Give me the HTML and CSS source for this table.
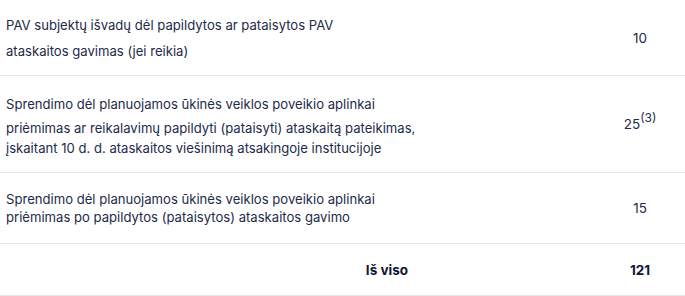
FILE: index.html
```html
<!DOCTYPE html>
<html lang="lt">
<head>
<meta charset="utf-8">
<link rel="stylesheet" href="styles.css">
</head>
<body>
<div class="table">
  <div class="row r1">
    <div class="desc">
      <span class="ln tall">PAV subjektų išvadų dėl papildytos ar pataisytos PAV</span>
      <span class="ln tall">ataskaitos gavimas (jei reikia)</span>
    </div>
    <div class="num">10</div>
  </div>
  <div class="row r2">
    <div class="desc">
      <span class="ln tall">Sprendimo dėl planuojamos ūkinės veiklos poveikio aplinkai</span>
      <span class="ln mid">priėmimas ar reikalavimų papildyti (pataisyti) ataskaitą pateikimas,</span>
      <span class="ln">įskaitant 10 d. d. ataskaitos viešinimą atsakingoje institucijoje</span>
    </div>
    <div class="num">25<sup>(3)</sup></div>
  </div>
  <div class="row r3">
    <div class="desc">
      <span class="ln">Sprendimo dėl planuojamos ūkinės veiklos poveikio aplinkai</span>
      <span class="ln">priėmimas po papildytos (pataisytos) ataskaitos gavimo</span>
    </div>
    <div class="num">15</div>
  </div>
  <div class="row r4">
    <div class="desc total">Iš viso</div>
    <div class="num total">121</div>
  </div>
</div>
</body>
</html>
```
FILE: styles.css
```css
html, body {
  margin: 0;
  padding: 0;
  background: #ffffff;
}
body {
  font-family: Inter, "Liberation Sans", Arial, sans-serif;
  font-size: 13.1px;
  color: #232a4a;
}
.table {
  width: 685px;
}
.row {
  display: grid;
  grid-template-columns: 415px 1fr 90px;
  align-items: center;
  border-bottom: 1px solid #e7e7e7;
}
.desc {
  grid-column: 1;
  padding-left: 6px;
  white-space: nowrap;
}
.num {
  grid-column: 3;
  text-align: center;
  font-size: 13.5px;
}
.ln {
  display: block;
  line-height: 18px;
}
.ln.tall {
  line-height: 26px;
}
.ln.mid {
  line-height: 22px;
}
.r1 { height: 75px; }
.r2 { height: 96px; }
.r3 { height: 70px; }
.r4 { height: 51px; }
.total {
  font-weight: bold;
  color: #0f1533;
}
.desc.total {
  text-align: right;
  padding-right: 7px;
  font-size: 13.5px;
}
sup {
  font-size: 12px;
  line-height: 0;
  vertical-align: 7px;
}
```
